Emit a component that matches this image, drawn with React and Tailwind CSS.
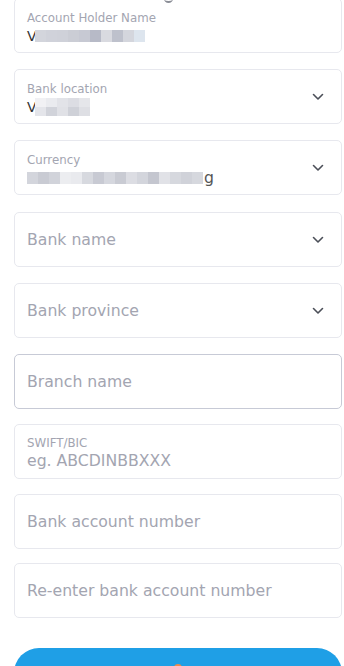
import React from "react";

const font = { fontFamily: "'DejaVu Sans', sans-serif" };

function Chevron() {
  return (
    <svg width="12" height="8" viewBox="0 0 12 8" className="shrink-0">
      <path d="M1.5 1.5 L6 6 L10.5 1.5" fill="none" stroke="#4b4f58" strokeWidth="1.6" strokeLinecap="round" strokeLinejoin="round" />
    </svg>
  );
}

function Blocks({ shades, h = 12 }) {
  return (
    <div className="flex">
      {shades.map((c, i) => (
        <div key={i} className="w-[11px]" style={{ background: c, height: h }} />
      ))}
    </div>
  );
}

function Box({ children, focused, className = "" }) {
  return (
    <div
      className={`h-[55px] shrink-0 rounded-[5px] border bg-white flex items-center pl-[12px] pr-[17px] ${
        focused ? "border-[#c7cad6]" : "border-[#e7e8ee]"
      } ${className}`}
    >
      {children}
    </div>
  );
}

function Placeholder({ text, chevron }) {
  return (
    <>
      <div className="flex-1 text-[15.7px] text-[#a3a5b1]">{text}</div>
      {chevron && <Chevron />}
    </>
  );
}

export default function App() {
  return (
    <div className="w-[344px] h-[666px] overflow-hidden bg-white relative" style={font}>
      <div className="absolute left-[164px] top-[-3px] w-[9px] h-[6px] rounded-b-full border-b-2 border-[#8a8d96]" />
      <div className="flex flex-col pl-[14px] pr-[2px] mt-[-2px]">
        <Box>
          <div className="flex-1 flex flex-col gap-[4px] pt-[3px]">
            <div className="text-[11.8px] text-[#a3a5b1] leading-[14px]">Account Holder Name</div>
            <div className="flex items-center h-[14px]">
              <span className="text-[14px] text-[#333] leading-none mr-[-2px]">V</span>
              <Blocks shades={["#d3d5dc", "#d0d2da", "#cfd1d9", "#cbcdd5", "#c7c9d3", "#b7bac7", "#d9dae0", "#bec1cc", "#d4d6dd", "#dde5ee"]} />
            </div>
          </div>
        </Box>
        <Box className="mt-[16px]">
          <div className="flex-1 flex flex-col gap-[2px] pt-[4px]">
            <div className="text-[11.8px] text-[#a3a5b1] leading-[14px]">Bank location</div>
            <div className="flex items-center h-[18px]">
              <span className="text-[14px] text-[#333] leading-none mr-[-2px]">V</span>
              <div className="flex flex-col">
                <Blocks h={9} shades={["#f1f1f4", "#eaebef", "#e2e3e8", "#dcdde3", "#e5e6ea"]} />
                <Blocks h={9} shades={["#e4e5ea", "#d1d3da", "#e0e1e6", "#cfd1d8", "#dedfe4"]} />
              </div>
            </div>
          </div>
          <Chevron />
        </Box>
        <Box className="mt-[16px]">
          <div className="flex-1 flex flex-col gap-[3px] pt-[4px]">
            <div className="text-[11.8px] text-[#a3a5b1] leading-[14px]">Currency</div>
            <div className="flex items-center h-[16px]">
              <Blocks shades={["#d3d5dc", "#c9cbd3", "#d1d3da", "#ecedf0", "#e9eaee", "#d7d9df", "#c8cad3", "#d5d7de", "#c9cbd3", "#dcdde3", "#d3d5dc", "#c4c6cf", "#e1e2e7", "#d6d8de", "#d0d2d9", "#d6d8de"]} />
              <span className="text-[15.7px] text-[#555] leading-none ml-[1px]">g</span>
            </div>
          </div>
          <Chevron />
        </Box>
        <Box className="mt-[17px]">
          <Placeholder text="Bank name" chevron />
        </Box>
        <Box className="mt-[16px]">
          <Placeholder text="Bank province" chevron />
        </Box>
        <Box focused className="mt-[16px]">
          <Placeholder text="Branch name" />
        </Box>
        <Box className="mt-[15px]">
          <div className="flex-1 flex flex-col gap-[1px] pt-[2px]">
            <div className="text-[11.8px] text-[#a3a5b1] leading-[14px]">SWIFT/BIC</div>
            <div className="text-[15.7px] text-[#a3a5b1] leading-[19px]">eg. ABCDINBBXXX</div>
          </div>
        </Box>
        <Box className="mt-[15px]">
          <Placeholder text="Bank account number" />
        </Box>
        <Box className="mt-[14px]">
          <Placeholder text="Re-enter bank account number" />
        </Box>
        <div className="mt-[30px] h-[50px] shrink-0 rounded-[25px] bg-[#1f9fe6] flex justify-center pt-[16px]">
          <div className="w-[8px] h-[8px] rounded-full bg-[#f08a4b]" />
        </div>
      </div>
    </div>
  );
}
